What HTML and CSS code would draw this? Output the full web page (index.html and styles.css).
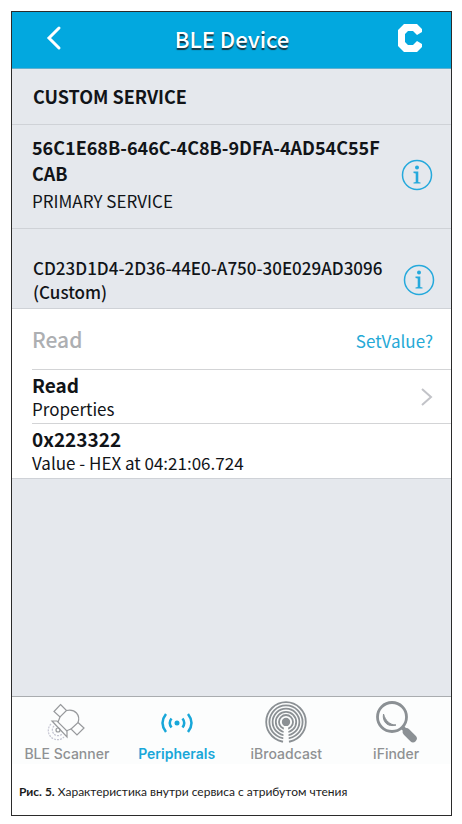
FILE: index.html
```html
<!DOCTYPE html>
<html lang="ru">
<head>
  <meta charset="UTF-8">
  <meta name="viewport" content="width=device-width, initial-scale=1.0">
  <title>BLE Device</title>
  <link rel="stylesheet" href="styles.css">
</head>
<body>
  <figure class="figure">
    <div class="app" lang="en">
      <header class="navbar">
        <button class="nav-btn" aria-label="Back">
          <svg width="16" height="26" viewBox="0 0 16 26"><path d="M13 3 L3 13 L13 23" fill="none" stroke="#fff" stroke-width="3" stroke-linecap="round"/></svg>
        </button>
        <h1>BLE Device</h1>
        <button class="nav-btn" aria-label="Connect">
          <svg width="26" height="30" viewBox="0 0 26 30"><path d="M7 1 H20 L25 6 V9 L20 12 L16 8 H11 L8 11 V19 L11 22 H16 L20 18 L25 21 V24 L20 29 H7 L1 23 V7 Z" fill="#fff"/></svg>
        </button>
      </header>

      <main>
        <h2 class="section-title">CUSTOM SERVICE</h2>

        <section class="service">
          <div class="service-text">
            <h3>56C1E68B-646C-4C8B-9DFA-4AD54C55FCAB</h3>
            <p>PRIMARY SERVICE</p>
          </div>
          <button class="info-btn" aria-label="Service info">
            <svg width="32" height="32" viewBox="0 0 32 32"><use href="#info"/></svg>
          </button>
        </section>

        <section class="service characteristic">
          <div class="service-text">
            <h3>CD23D1D4-2D36-44E0-A750-30E029AD3096 (Custom)</h3>
          </div>
          <button class="info-btn" aria-label="Characteristic info">
            <svg width="32" height="32" viewBox="0 0 32 32">
              <g id="info">
                <circle cx="16" cy="16" r="14.500" fill="none" stroke="#25a9dc" stroke-width="1.500"/>
                <circle cx="16" cy="8.500" r="2" fill="#25a9dc"/>
                <path d="M12.500 12.500 H17.300 V23 L19.500 23.500 V24.500 H12.500 V23.500 L14.700 23 V14.500 L12.500 14 Z" fill="#25a9dc"/>
              </g>
            </svg>
          </button>
        </section>

        <ul class="rows">
          <li class="row row-action">
            <button class="read-btn" disabled>Read</button>
            <button class="set-btn">SetValue?</button>
          </li>
          <li class="row">
            <div>
              <strong>Read</strong>
              <span>Properties</span>
            </div>
            <svg width="12" height="20" viewBox="0 0 12 20"><path d="M1 2 L10 10 L1 18" fill="none" stroke="#c2c3c8" stroke-width="2"/></svg>
          </li>
          <li class="row">
            <div>
              <strong>0x223322</strong>
              <span>Value - HEX at 04:21:06.724</span>
            </div>
          </li>
        </ul>
      </main>

      <nav class="tabbar">
        <a href="#scanner">
          <svg width="42" height="42" viewBox="0 0 42 42" fill="none" stroke="#97999c" stroke-width="1.200">
            <path d="M14.500 3.500 L20.500 9.500 L14 16 L8 10.500 Z"/>
            <path d="M20.500 9.500 Q27 8 30.500 12 Q34 16 32 21.500"/>
            <path d="M14 16 L12 21 M25 28 L20 30"/>
            <path d="M32 21.500 L38 27 L31 34 L25 28 Z"/>
            <path d="M6 20 L11 20 L21 30 V36 Z"/>
            <circle cx="12" cy="29" r="2"/>
            <path d="M8 25 A5.500 5.500 0 1 0 16 33 M5 23 A9 9 0 1 0 18 36" stroke="#c4c5d2" stroke-dasharray="2 1"/>
          </svg>
          BLE Scanner
        </a>
        <a href="#peripherals" class="active">
          <svg width="42" height="42" viewBox="0 0 42 42" fill="none" stroke="#18a7d9" stroke-width="2.500">
            <circle cx="21" cy="22" r="2.500" fill="#18a7d9" stroke="none"/>
            <path d="M15.500 17.500 Q12 22 15.500 26.500 M26.500 17.500 Q30 22 26.500 26.500"/>
            <path d="M10 13 Q3 22 10 31 M32 13 Q39 22 32 31"/>
          </svg>
          Peripherals
        </a>
        <a href="#ibroadcast">
          <svg width="42" height="42" viewBox="0 0 42 42" fill="none" stroke="#8b9094" stroke-width="1.800">
            <circle cx="21" cy="21" r="4.200" fill="#8b9094" stroke="none"/>
            <circle cx="21" cy="21" r="7"/>
            <circle cx="21" cy="21" r="10.200"/>
            <circle cx="21" cy="21" r="13.400"/>
            <circle cx="21" cy="21" r="16.600"/>
            <circle cx="21" cy="21" r="19.800"/>
            <path d="M19 25 L18 42 H24 L23 25 Z" fill="#fcfdfd" stroke="none"/>
          </svg>
          iBroadcast
        </a>
        <a href="#ifinder">
          <svg width="42" height="42" viewBox="0 0 42 42" fill="none" stroke="#8b9094">
            <circle cx="17" cy="16" r="14.500" stroke-width="2.800"/>
            <path d="M8.500 13 C7 21 13 26.500 21 24 C15 24 10.500 20 8.500 13 Z" fill="#8b9094"/>
            <path d="M27 26 L32 31" stroke-width="4"/>
            <path d="M31.500 31 L38 37.500" stroke-width="7.500" stroke-linecap="round"/>
          </svg>
          iFinder
        </a>
      </nav>
    </div>
    <figcaption><b>Рис. 5.</b> Характеристика внутри сервиса с атрибутом чтения</figcaption>
  </figure>
</body>
</html>
```
FILE: styles.css
```css
* {
  margin: 0;
  padding: 0;
  box-sizing: border-box;
}

body {
  min-height: 100vh;
  padding: 11px 10px 8px 11px;
  background: #fff;
  display: flex;
}

button {
  border: none;
  background: none;
  font: inherit;
  cursor: pointer;
}

svg {
  display: block;
  flex-shrink: 0;
}

.figure {
  flex: 1;
  display: flex;
  flex-direction: column;
  border: 1px solid #2b2b2b;
}

.app {
  flex: 1;
  display: flex;
  flex-direction: column;
  background: #e5e8ed;
  color: #111418;
  font-family: "Noto Sans CJK SC", sans-serif;
}

/* Top bar */
.navbar {
  height: 57px;
  padding: 0 28px 4px 34px;
  display: flex;
  align-items: center;
  justify-content: space-between;
  background: #02a8df;
  border-bottom: 1px solid #5fb0cf;
}

.navbar h1 {
  padding-left: 5px;
  font-size: 22px;
  line-height: 28px;
  font-weight: 500;
  color: #fff;
  text-shadow: 0 2px 1px #17343f;
}

/* Services */
main {
  flex: 1;
}

.section-title {
  padding: 14px 21px;
  font-size: 18px;
  line-height: 27px;
  font-weight: 700;
  border-bottom: 1px solid #cfd2d7;
}

.service {
  display: flex;
  align-items: center;
  justify-content: space-between;
  padding: 9px 18px 12px 20px;
  border-bottom: 1px solid #cfd2d7;
}

.service-text {
  width: 356px;
}

.service h3 {
  font-size: 18px;
  line-height: 26px;
  font-weight: 700;
  word-break: break-all;
}

.service p {
  font-size: 17px;
  line-height: 30px;
}

.characteristic {
  padding: 27px 16px 4px 21px;
}

.characteristic h3 {
  font-size: 17px;
  line-height: 24px;
  font-weight: 500;
  word-break: normal;
}

/* Characteristic rows */
.rows {
  list-style: none;
  padding-left: 20px;
  background: #fff;
  border-bottom: 1px solid #cfd2d7;
}

.row {
  display: flex;
  align-items: center;
  justify-content: space-between;
  height: 54px;
  padding-right: 18px;
  border-bottom: 1px solid #d3d4d6;
}

.row:last-child {
  border-bottom: none;
}

.row-action {
  height: 61px;
}

.row strong,
.row span {
  display: block;
}

.row strong {
  font-size: 19px;
  line-height: 24px;
  font-weight: 700;
}

.row span {
  font-size: 17px;
  line-height: 24px;
}

.read-btn {
  font-size: 21px;
  font-weight: 500;
  color: #adafb2;
}

.set-btn {
  padding-top: 2px;
  font-size: 17px;
  color: #25a9d6;
}

/* Bottom tabs */
.tabbar {
  display: flex;
  height: 68px;
  background: #fcfdfd;
  border-top: 1px solid #a9acaf;
}

.tabbar a {
  flex: 1;
  display: flex;
  flex-direction: column;
  align-items: center;
  padding-top: 4px;
  font-family: Inter, sans-serif;
  font-size: 14px;
  line-height: 22px;
  font-weight: 500;
  color: #8f9193;
  text-decoration: none;
}

.tabbar .active {
  color: #18a7d9;
  font-weight: 600;
}

figcaption {
  height: 51px;
  padding: 18px 7px;
  font-family: Lato, sans-serif;
  font-size: 12px;
  line-height: 20px;
  color: #1c1c1c;
}
```
